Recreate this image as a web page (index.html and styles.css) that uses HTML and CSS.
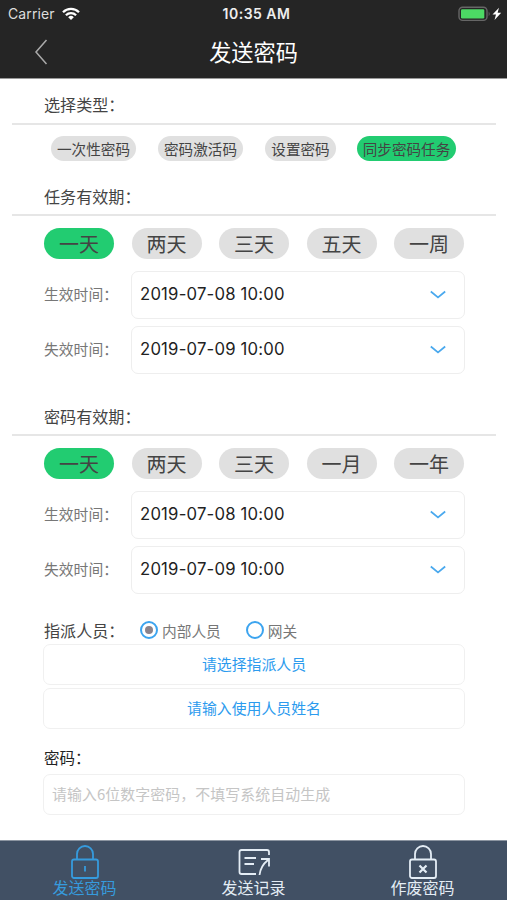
FILE: index.html
```html
<!DOCTYPE html>
<html lang="zh-CN">
<head>
<meta charset="utf-8">
<title>发送密码</title>
<link rel="stylesheet" href="styles.css">
</head>
<body>
<div class="app">
  <header class="header">
    <div class="status">
      <div class="carrier">Carrier
        <svg class="wifi" width="18" height="14" viewBox="0 0 18 14" fill="none" stroke="#fff" stroke-width="2.3"><path d="M1 5.2a11.4 11.4 0 0 1 16 0"/><path d="M3.9 8.3a7.3 7.3 0 0 1 10.2 0"/><path d="M9 13 6.2 10.2a4 4 0 0 1 5.6 0z" fill="#fff" stroke="none"/></svg>
      </div>
      <div class="clock">10:35 AM</div>
      <div class="power">
        <svg width="44" height="16" viewBox="0 0 44 16"><rect x="1" y="1.2" width="28" height="13.2" rx="3.6" fill="none" stroke="#666" stroke-width="1.4"/><rect x="3" y="3.2" width="23.3" height="9.3" rx="1.2" fill="#4cd964"/><path d="M30.700 5.400q2 2.400 0 4.800z" fill="#666"/><path d="m41 1.800-6.500 6.700h3.500l-1.500 5.500 6.700-7.200h-3.600z" fill="#fff"/></svg>
      </div>
    </div>
    <div class="nav">
      <svg class="back" width="14" height="26" viewBox="0 0 14 26" fill="none" stroke="#aaa" stroke-width="1.5"><path d="M12.500 1 2 13l10.500 12"/></svg>
      <h1 class="title">发送密码</h1>
    </div>
  </header>

  <main class="form">
    <h2 class="heading first">选择类型：</h2>
    <div class="types">
      <button class="type">一次性密码</button>
      <button class="type">密码激活码</button>
      <button class="type short">设置密码</button>
      <button class="type long on">同步密码任务</button>
    </div>

    <h2 class="heading">任务有效期：</h2>
    <div class="spans">
      <button class="span on">一天</button><button class="span">两天</button><button class="span">三天</button><button class="span">五天</button><button class="span">一周</button>
    </div>
    <div class="field"><span class="label">生效时间：</span><div class="select">2019-07-08 10:00<svg class="chevron" width="18" height="10" viewBox="0 0 18 10"><path d="m1.800 2.500 7.200 6 7.200-6"/></svg></div></div>
    <div class="field"><span class="label">失效时间：</span><div class="select">2019-07-09 10:00<svg class="chevron" width="18" height="10" viewBox="0 0 18 10"><path d="m1.800 2.500 7.200 6 7.200-6"/></svg></div></div>

    <h2 class="heading later">密码有效期：</h2>
    <div class="spans">
      <button class="span on">一天</button><button class="span">两天</button><button class="span">三天</button><button class="span">一月</button><button class="span">一年</button>
    </div>
    <div class="field"><span class="label">生效时间：</span><div class="select">2019-07-08 10:00<svg class="chevron" width="18" height="10" viewBox="0 0 18 10"><path d="m1.800 2.500 7.200 6 7.200-6"/></svg></div></div>
    <div class="field"><span class="label">失效时间：</span><div class="select">2019-07-09 10:00<svg class="chevron" width="18" height="10" viewBox="0 0 18 10"><path d="m1.800 2.500 7.200 6 7.200-6"/></svg></div></div>

    <div class="assign">
      <span class="assign-label">指派人员：</span>
      <span class="option"><i class="radio checked"></i>内部人员</span>
      <span class="option"><i class="radio"></i>网关</span>
    </div>
    <div class="box">请选择指派人员</div>
    <div class="box">请输入使用人员姓名</div>
    <div class="code-label">密码：</div>
    <div class="box hint">请输入6位数字密码，不填写系统自动生成</div>
  </main>

  <nav class="tabs">
    <div class="tab active">
      <svg width="34" height="36" viewBox="0 0 34 36"><rect x="4" y="15.500" width="26" height="18.500" rx="2"/><path d="M9 15.500V10a8 8 0 0 1 16 0v5.500M17 22v5.500"/></svg>
      <span>发送密码</span>
    </div>
    <div class="tab">
      <svg width="34" height="36" viewBox="0 0 34 36"><path d="M32 11V8q0-2-2-2H4.500q-2 0-2 2v20q0 2 2 2H19M7.500 14H19M7.500 20H17M22.500 31q1-9 8.500-15M24 15h8v7.500"/></svg>
      <span>发送记录</span>
    </div>
    <div class="tab">
      <svg width="34" height="36" viewBox="0 0 34 36"><rect x="4" y="15.500" width="26" height="18.500" rx="2"/><path d="M9 15.500V10a8 8 0 0 1 16 0v5.500"/><path class="cross" d="m13.500 21.500 7 7M20.500 21.500l-7 7"/></svg>
      <span>作废密码</span>
    </div>
  </nav>
</div>
</body>
</html>
```
FILE: styles.css
```css
* { box-sizing: border-box; }
body { margin: 0; background: #fff; font-family: "Noto Sans CJK SC", sans-serif; color: #444; }
h1, h2 { margin: 0; font-weight: 400; }
button { border: 0; padding: 0; font: inherit; color: #444; background: #e0e0e0; white-space: nowrap; }
svg { display: block; flex: none; }
.app { width: 507px; height: 900px; display: flex; flex-direction: column; overflow: hidden; }

.header { height: 79px; background: #252525; color: #fff; border-bottom: 1px solid #999; }
.status { height: 28px; display: grid; grid-template-columns: 1fr auto 1fr; align-items: center; padding: 0 5px 0 8px; font: 14px/28px Inter, sans-serif; }
.carrier { display: flex; align-items: center; gap: 7px; color: #ddd; letter-spacing: .1px; }
.clock { font-weight: 600; letter-spacing: .5px; padding-left: 3px; color: #eee; }
.power { justify-self: end; margin-top: -1px; }
.nav { height: 50px; display: grid; grid-template-columns: 1fr auto 1fr; align-items: center; padding: 0 34px 3px; }
.title { font-size: 22.2px; line-height: 44px; grid-column: 2; margin-top: -1px; }

.form { flex: 1; padding: 0 11px 0 12px; }
.heading { height: 37px; margin-top: 18px; padding-left: 32px; font-size: 16.1px; line-height: 34px; border-bottom: 2px solid #e6e6e6; }
.heading.first { height: 46px; margin-top: 0; line-height: 51px; }
.heading.later { margin-top: 26px; }
.types { display: flex; gap: 22px; padding: 11px 0 0 39px; height: 36px; }
.type { height: 25px; width: 85px; border-radius: 13px; font-size: 14.6px; line-height: 24px; }
.type.short { width: 71px; }
.type.long { width: 99px; margin-left: -1px; }
.type.on, .span.on { background: #22cc71; }
.spans { display: flex; justify-content: space-between; padding: 0 32px; margin: 12px 0 12px; }
.span { width: 70px; height: 31px; border-radius: 16px; font-size: 20px; line-height: 29px; }
.field { display: flex; align-items: center; padding: 0 31px 0 32px; height: 47px; margin-bottom: 8px; }
.label { width: 87px; margin-top: -2px; font-size: 14.8px; color: #777; }
.select { flex: 1; height: 48px; display: flex; align-items: center; justify-content: space-between; border: 1.5px solid #eee; border-radius: 7px; padding: 0 17px 2px 8px; font: 16.7px Inter, sans-serif; letter-spacing: .2px; color: #222; }
.chevron { fill: none; stroke: #4aa9ee; stroke-width: 1.7; }

.assign { display: flex; align-items: center; height: 26px; margin: 24px 0 1px 32px; font-size: 16.1px; }
.assign-label { width: 96px; }
.option { display: flex; align-items: center; gap: 4px; margin-right: 25px; font-size: 14.7px; color: #777; }
.radio { width: 18px; height: 18px; border: 2px solid #3ca4ef; border-radius: 50%; display: grid; place-items: center; }
.checked::after { content: ""; width: 8px; height: 8px; border-radius: 50%; background: #8b838b; }
.box { height: 41px; margin: 0 31px 3px; border: 1.5px solid #f0f0f0; border-radius: 7px; font-size: 14.9px; line-height: 38px; text-align: center; color: #2c9bee; white-space: nowrap; }
.code-label { height: 42px; padding: 6px 0 0 32px; font-size: 15.5px; line-height: 38px; color: #222; }
.box.hint { text-align: left; padding-left: 8px; letter-spacing: .1px; color: #c5c5c5; }

.tabs { height: 60px; flex: none; display: grid; grid-template-columns: repeat(3, 1fr); background: #415064; border-top: 1px solid #8c95a1; }
.tab { display: flex; flex-direction: column; align-items: center; padding-top: 3px; color: #e4edf5; font-size: 16px; line-height: 20px; }
.tab svg { fill: none; stroke: currentColor; stroke-width: 1.8; }
.tab .cross { stroke-width: 2.2; }
.tab span { margin-top: -3px; }
.active { color: #369bdd; }
```
